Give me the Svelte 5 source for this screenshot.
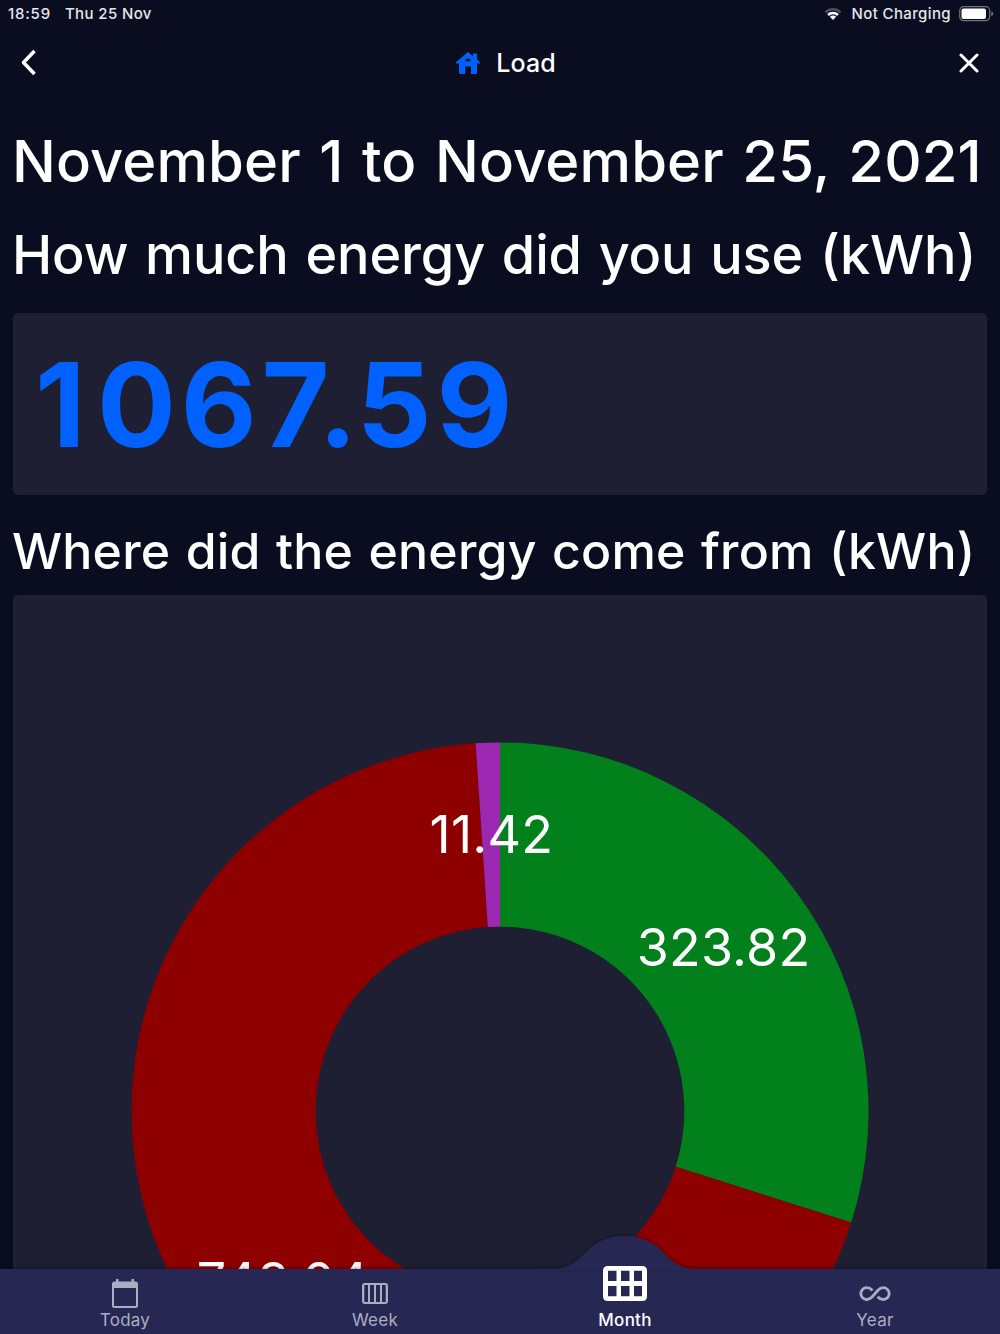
<script>
  const center = { x: 487, y: 516 };
  const outer = 368.5;
  const inner = 184.3;
  const slices = [
    { value: 323.82, label: '323.82', color: '#02801c' },
    { value: 748.04, label: '748.04', color: '#8e0000' },
    { value: 11.42, label: '11.42', color: '#9c27b0' }
  ];
  const total = slices.reduce((sum, s) => sum + s.value, 0);

  function point(angle, radius) {
    return [center.x + radius * Math.sin(angle), center.y - radius * Math.cos(angle)];
  }

  let start = 0;
  const arcs = slices.map((s) => {
    const end = start + (s.value / total) * Math.PI * 2;
    const large = end - start > Math.PI ? 1 : 0;
    const d = `M${point(start, outer)}A${outer} ${outer} 0 ${large} 1 ${point(end, outer)}L${point(end, inner)}A${inner} ${inner} 0 ${large} 0 ${point(start, inner)}Z`;
    const [x, y] = point((start + end) / 2, (outer + inner) / 2);
    start = end;
    return { ...s, d, x, y };
  });
</script>

<div class="screen">
  <div class="status">
    <span class="time">18:59</span>
    <span class="date">Thu 25 Nov</span>
    <svg class="wifi" width="18" height="14" viewBox="0 0 18 14">
      <path d="M0.6 4.4a12 12 0 0 1 16.8 0l-1.7 1.8a9.6 9.6 0 0 0-13.4 0z" fill="#4c4f5c" />
      <path d="M3.2 7.1a8.3 8.3 0 0 1 11.6 0l-1.7 1.8a5.8 5.8 0 0 0-8.2 0z" fill="#fff" />
      <path d="M5.9 9.8a4.4 4.4 0 0 1 6.2 0L9 13z" fill="#fff" />
    </svg>
    <span class="charge">Not Charging</span>
    <svg class="battery" width="35" height="16" viewBox="0 0 35 16">
      <rect x="0.7" y="0.7" width="30" height="14" rx="4" fill="none" stroke="#70727c" stroke-width="1.2" />
      <rect x="2.5" y="2.5" width="24.5" height="10.4" rx="2" fill="#fff" />
      <path d="M32.3 5.2q2 .8 2 2.5t-2 2.5z" fill="#70727c" />
    </svg>
  </div>

  <header>
    <svg class="back" width="18" height="28" viewBox="0 0 18 28">
      <path d="M15.500 2L4.500 13.500L15.500 25" fill="none" stroke="#fff" stroke-width="3.6" stroke-linejoin="round" />
    </svg>
    <div class="title">
      <svg width="24" height="22" viewBox="0 0 24 22">
        <path
          fill="#0061ff"
          fill-rule="evenodd"
          d="M12 0L17 4.3V1.6H21V7.6L24 10.2V11.4H21V20.5Q21 22 19.5 22H15V14.5H9.2V22H4.5Q3 22 3 20.5V11.4H0V10.2ZM9.3 9.2H14.7Q14.6 6.6 12 6.6T9.3 9.2Z"
        />
      </svg>
      <span>Load</span>
    </div>
    <svg class="close" width="20" height="20" viewBox="0 0 20 20">
      <path d="M2 2L18 18M18 2L2 18" fill="none" stroke="#fff" stroke-width="3" stroke-linecap="round" />
    </svg>
  </header>

  <main>
    <h1>November 1 to November 25, 2021</h1>
    <h2 class="used">How much energy did you use (kWh)</h2>
    <section class="total"><span class="lead">1</span>067<span class="point">.</span>59</section>
    <h2 class="source">Where did the energy come from (kWh)</h2>
    <section class="chart">
      <svg width="974" height="900" viewBox="0 0 974 900">
        {#each arcs as arc}
          <path d={arc.d} fill={arc.color} />
        {/each}
        {#each arcs as arc}
          <text class="label" x={arc.x + 0.5} y={arc.y + 18.5} text-anchor="middle">{arc.label}</text>
        {/each}
      </svg>
    </section>
  </main>

  <nav>
    <svg class="hump" width="180" height="34" viewBox="0 0 180 34">
      <path d="M0 34V33H13C28 33 36 26 44 18L52 10.500C62 3 72 0 84 0C96 0 107 3 117 10.500C122 14.500 126 20 130 23C137 29 145 33 157 33H180V34Z" fill="#262853" />
    </svg>
    <div class="tab">
      <svg width="28" height="30" viewBox="0 0 28 30">
        <path fill="#adadc1" fill-rule="evenodd" d="M5 0H7.500V2.500H20.500V0H23V2.500H24.500Q27 2.500 27 5V26.500Q27 29 24.500 29H3.500Q1 29 1 26.500V5Q1 2.500 3.500 2.500H5ZM3 9V27H25V9Z" />
      </svg>
      <span>Today</span>
    </div>
    <div class="tab">
      <svg width="28" height="30" viewBox="0 0 28 30">
        <path fill="#adadc1" fill-rule="evenodd" d="M4 4H24Q27 4 27 7V22Q27 25 24 25H4Q1 25 1 22V7Q1 4 4 4ZM3.300 6V23H7V6ZM9 6V23H13V6ZM15 6V23H19V6ZM21 6V23H24.700V6Z" />
      </svg>
      <span>Week</span>
    </div>
    <div class="tab active">
      <svg width="44" height="35" viewBox="0 0 44 36" preserveAspectRatio="none">
        <path fill="#fff" fill-rule="evenodd" d="M5 0H39Q44 0 44 5V31Q44 36 39 36H5Q0 36 0 31V5Q0 0 5 0ZM5 5V15.500H13.500V5ZM18 5V15.500H26.500V5ZM31 5V15.500H39V5ZM5 20.500V31H13.500V20.500ZM18 20.500V31H26.500V20.500ZM31 20.500V31H39V20.500Z" />
      </svg>
      <span>Month</span>
    </div>
    <div class="tab">
      <svg width="32" height="30" viewBox="0 0 32 30">
        <path fill="none" stroke="#adadc1" stroke-width="2.800" d="M13.500 11.500C11.500 9.300 10 8.700 7.700 8.700A5.900 5.900 0 0 0 7.700 20.500C10 20.500 11.500 19.500 13 18L19 11.200C20.500 9.600 22 8.700 24.300 8.700A5.900 5.900 0 0 1 24.300 20.500C22 20.500 20.500 19.900 18.500 17.700" />
      </svg>
      <span>Year</span>
    </div>
  </nav>
</div>

<style>
  :global(body) {
    background: #0a0d1f;
  }
  .screen {
    height: 1334px;
    overflow: hidden;
    display: flex;
    flex-direction: column;
    position: relative;
    background: #0a0d1f;
    color: #fff;
    font-family: Inter, 'Liberation Sans', sans-serif;
  }
  svg {
    display: block;
    flex: none;
  }
  .status {
    height: 27px;
    padding: 0 6px 0 8px;
    display: flex;
    align-items: center;
    font-size: 15px;
    font-weight: 500;
    letter-spacing: 0.38px;
    color: #e6e7ea;
    white-space: nowrap;
  }
  .time {
    letter-spacing: 0.8px;
  }
  .date {
    margin-left: 14px;
  }
  .wifi {
    margin-left: auto;
  }
  .charge {
    margin: 0 8px 0 9px;
  }
  header {
    height: 71px;
    padding: 0 21px 0 19px;
    display: flex;
    align-items: center;
    justify-content: space-between;
    box-shadow: 0 2px 4px #00000033;
  }
  .title {
    display: flex;
    align-items: center;
    gap: 16px;
    margin-left: 16px;
    font-size: 25px;
    font-weight: 500;
    letter-spacing: 0.1px;
  }
  main {
    flex: 1;
    min-height: 0;
    padding: 0 13px;
    display: flex;
    flex-direction: column;
  }
  h1,
  h2 {
    margin: 0;
    font-weight: 500;
    white-space: nowrap;
  }
  h1 {
    margin: 28px 0 0 -1px;
    font-size: 58px;
    line-height: 70px;
    letter-spacing: 0.1px;
    word-spacing: 3px;
  }
  .used {
    margin: 27px 0 0 -1px;
    font-size: 54px;
    line-height: 64px;
    letter-spacing: -0.12px;
    word-spacing: 2.5px;
  }
  .source {
    margin: 26px 0 0 -1px;
    font-size: 50px;
    line-height: 60px;
    letter-spacing: 0.2px;
    word-spacing: 1.8px;
  }
  .total {
    flex: none;
    margin-top: 26px;
    height: 182px;
    padding-left: 22px;
    box-sizing: border-box;
    border-radius: 5px;
    background: #1e1f33;
    color: #0061ff;
    font-size: 117px;
    font-weight: 700;
    line-height: 183px;
    letter-spacing: 4.8px;
  }
  .lead {
    letter-spacing: 11.5px;
  }
  .point {
    margin-left: -16px;
    letter-spacing: -0.5px;
  }
  .chart {
    flex: 1;
    min-height: 0;
    margin-top: 14px;
    overflow: hidden;
    border-radius: 5px 5px 0 0;
    background: #1e1f33;
  }
  .label {
    fill: #fff;
    font-size: 52px;
    letter-spacing: 0.2px;
  }
  nav {
    flex: none;
    position: relative;
    height: 65px;
    display: grid;
    grid-template-columns: repeat(4, 1fr);
    grid-template-rows: 65px;
    background: #262853;
    box-shadow: 0 -1px 4px #00000055;
  }
  .hump {
    position: absolute;
    left: 540px;
    top: -33px;
    filter: drop-shadow(0 -1px 2px #00000055);
  }
  .tab {
    position: relative;
    display: flex;
    flex-direction: column;
    align-items: center;
    justify-content: flex-end;
    padding-bottom: 3px;
    font-size: 17px;
    line-height: 22px;
    letter-spacing: 0.25px;
    color: #adadc1;
  }
  .active {
    gap: 8px;
    color: #fff;
    font-weight: 500;
  }
</style>
